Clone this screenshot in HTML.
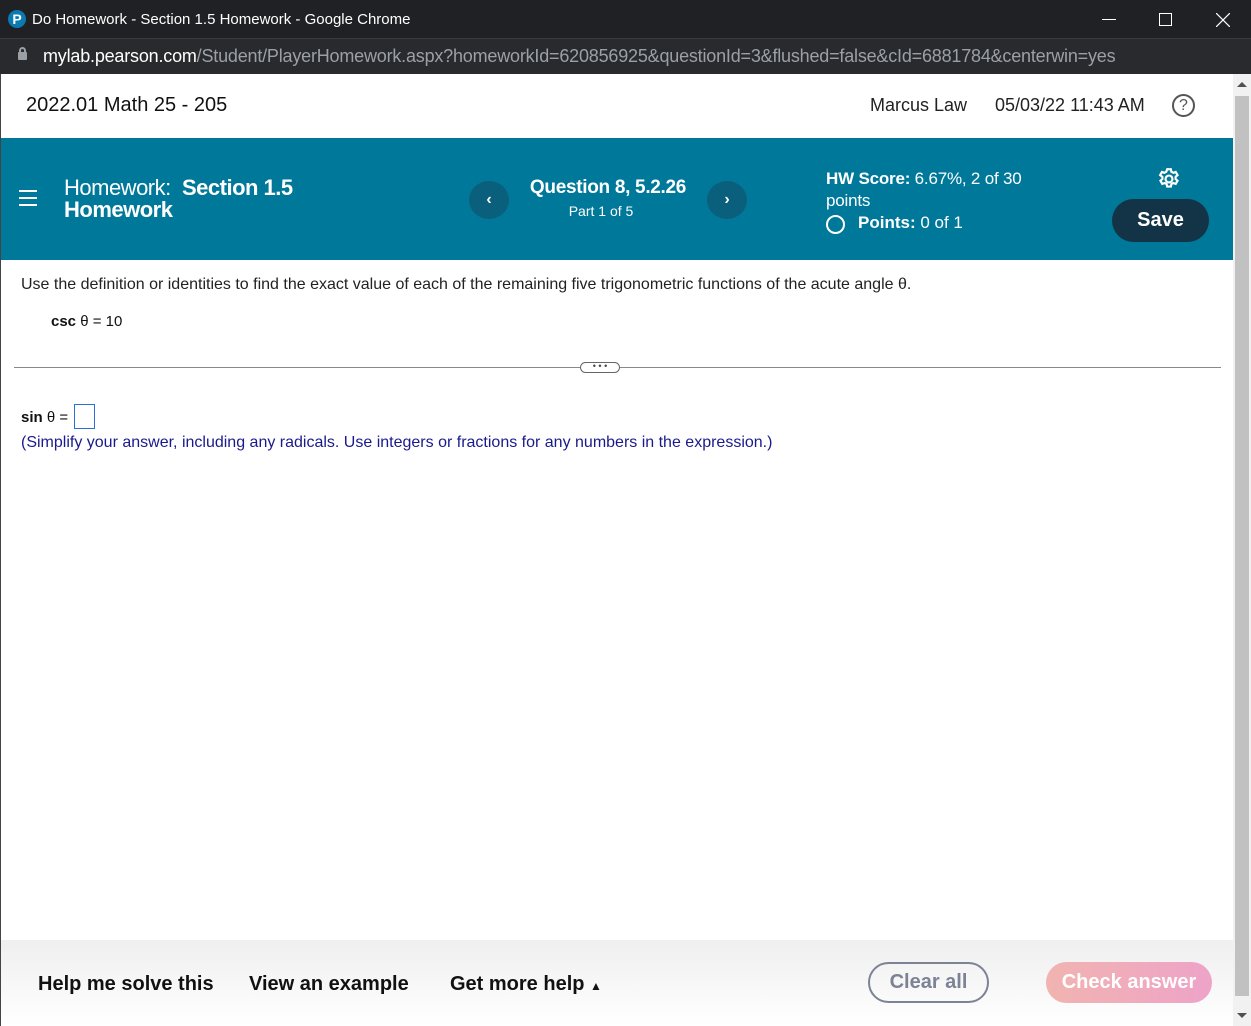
<!DOCTYPE html>
<html><head><meta charset="utf-8"><style>
*{margin:0;padding:0;box-sizing:border-box}
body{width:1251px;height:1026px;overflow:hidden;background:#fff;font-family:"Liberation Sans",Arial,sans-serif;position:relative}
.abs{position:absolute}
</style></head><body>
<div class="abs" style="left:0;top:0;width:1251px;height:38px;background:#202124"></div>
<div class="abs" style="left:8px;top:10px;width:18px;height:18px;border-radius:50%;background:#0a7ab0;color:#fff;font-size:14px;text-align:center;line-height:18px;font-weight:bold">P</div>
<div class="abs" style="left:32px;top:11px;color:#fff;font-size:15px">Do Homework - Section 1.5 Homework - Google Chrome</div>
<div class="abs" style="left:1102px;top:19px;width:14px;height:1px;background:#fff"></div>
<div class="abs" style="left:1159px;top:13px;width:13px;height:13px;border:1px solid #fff"></div>
<svg class="abs" style="left:1216px;top:13px" width="14" height="14"><path d="M0 0L14 14M14 0L0 14" stroke="#fff" stroke-width="1.2"/></svg>
<div class="abs" style="left:0;top:38px;width:1251px;height:36px;background:#292a2d;border-top:1px solid #3a3b3e"></div>
<div class="abs" style="left:18px;top:52px;width:9px;height:8px;background:#9aa0a6;border-radius:1px"></div>
<div class="abs" style="left:19px;top:47px;width:7px;height:7px;border:2px solid #9aa0a6;border-bottom:none;border-radius:4px 4px 0 0"></div>
<div class="abs" style="left:43px;top:46px;font-size:18px;color:#fff;letter-spacing:-0.2px">mylab.pearson.com<span style="color:#9aa0a6">/Student/PlayerHomework.aspx?homeworkId=620856925&amp;questionId=3&amp;flushed=false&amp;cId=6881784&amp;centerwin=yes</span></div>
<div class="abs" style="left:0;top:74px;width:1px;height:952px;background:#444"></div>
<div class="abs" style="left:1233px;top:74px;width:18px;height:952px;background:#f1f1f1"></div>
<div class="abs" style="left:1235px;top:96px;width:14px;height:900px;background:#c1c1c1"></div>
<div class="abs" style="left:1237px;top:82px;width:0;height:0;border-left:5px solid transparent;border-right:5px solid transparent;border-bottom:5px solid #505050"></div>
<div class="abs" style="left:1237px;top:1013px;width:0;height:0;border-left:5px solid transparent;border-right:5px solid transparent;border-top:5px solid #505050"></div>
<div class="abs" style="left:26px;top:94px;font-size:20px;color:#111">2022.01 Math 25 - 205</div>
<div class="abs" style="left:870px;top:95px;font-size:18px;color:#222">Marcus Law</div>
<div class="abs" style="left:995px;top:95px;font-size:18px;color:#222">05/03/22 11:43 AM</div>
<div class="abs" style="left:1172px;top:94px;width:23px;height:23px;border:2px solid #555;border-radius:50%;text-align:center;font-size:16px;line-height:19px;color:#555">?</div>
<div class="abs" style="left:1px;top:138px;width:1232px;height:122px;background:#00789a"></div>
<div class="abs" style="left:19px;top:190px;width:18px;height:2px;background:#fff;box-shadow:0 7px 0 #fff,0 14px 0 #fff"></div>
<div class="abs" style="left:64px;top:177px;color:#fff;font-size:22px;line-height:22px;letter-spacing:-0.5px">Homework: &nbsp;<b>Section 1.5</b><br><b>Homework</b></div>
<div class="abs" style="left:469px;top:181px;width:40px;height:38px;border-radius:50%;background:#0a5f7c;color:#fff;text-align:center;line-height:38px;font-size:16px;font-weight:bold">‹</div>
<div class="abs" style="left:707px;top:181px;width:40px;height:38px;border-radius:50%;background:#0a5f7c;color:#fff;text-align:center;line-height:38px;font-size:16px;font-weight:bold">›</div>
<div class="abs" style="left:509px;top:177px;width:198px;text-align:center;color:#fff;font-size:19px;font-weight:bold;letter-spacing:-0.3px">Question 8, 5.2.26</div>
<div class="abs" style="left:509px;top:203px;width:184px;text-align:center;color:#fff;font-size:14px">Part 1 of 5</div>
<div class="abs" style="left:826px;top:168px;color:#fff;font-size:17px;line-height:22px;letter-spacing:-0.2px"><b>HW Score:</b> 6.67%, 2 of 30<br>points</div>
<div class="abs" style="left:826px;top:215px;width:19px;height:19px;border:2.5px solid #fff;border-radius:50%"></div>
<div class="abs" style="left:858px;top:213px;color:#fff;font-size:17px"><b>Points:</b> 0 of 1</div>
<svg class="abs" style="left:1156px;top:166px" width="26" height="26" viewBox="0 0 24 24" fill="none" stroke="#fff" stroke-width="2"><circle cx="12" cy="12" r="3.2"/><path d="M10.3 3h3.4l.5 2.3 1.8 1 2.2-.8 1.7 2.9-1.8 1.6v2l1.8 1.6-1.7 2.9-2.2-.8-1.8 1-.5 2.3h-3.4l-.5-2.3-1.8-1-2.2.8-1.7-2.9 1.8-1.6v-2L3.8 8.4l1.7-2.9 2.2.8 1.8-1z"/></svg>
<div class="abs" style="left:1112px;top:199px;width:97px;height:43px;border-radius:22px;background:#133446;color:#fff;font-weight:bold;font-size:20px;text-align:center;line-height:43px">Save</div>
<div class="abs" style="left:21px;top:276px;font-size:16px;color:#222">Use the definition or identities to find the exact value of each of the remaining five trigonometric functions of the acute angle θ.</div>
<div class="abs" style="left:51px;top:313px;font-size:15px;color:#111"><b>csc</b> θ = 10</div>
<div class="abs" style="left:14px;top:367px;width:1207px;height:1px;background:#888"></div>
<div class="abs" style="left:580px;top:362px;width:40px;height:11px;border:1px solid #666;border-radius:6px;background:#fff;font-size:9px;line-height:6px;text-align:center;color:#444">• • •</div>
<div class="abs" style="left:21px;top:409px;font-size:15px;color:#111"><b>sin</b> θ =</div>
<div class="abs" style="left:74px;top:404px;width:21px;height:25px;border:1px solid #2a6fdb"></div>
<div class="abs" style="left:21px;top:434px;font-size:16px;color:#1a1a8c">(Simplify your answer, including any radicals. Use integers or fractions for any numbers in the expression.)</div>
<div class="abs" style="left:1px;top:940px;width:1232px;height:86px;background:linear-gradient(#efefef,#fff)"></div>
<div class="abs" style="left:38px;top:973px;font-size:20px;color:#111;font-weight:bold">Help me solve this</div>
<div class="abs" style="left:249px;top:973px;font-size:20px;color:#111;font-weight:bold">View an example</div>
<div class="abs" style="left:450px;top:973px;font-size:20px;color:#111;font-weight:bold">Get more help <span style="font-size:12px">▲</span></div>
<div class="abs" style="left:868px;top:962px;width:121px;height:41px;border:2px solid #7c8394;border-radius:21px;color:#7c8394;font-size:20px;font-weight:bold;text-align:center;line-height:37px">Clear all</div>
<div class="abs" style="left:1046px;top:962px;width:166px;height:41px;border-radius:21px;background:linear-gradient(90deg,#f1b4b0,#eea3c8);color:#fff;font-size:20px;font-weight:bold;text-align:center;line-height:41px">Check answer</div>
</body></html>
